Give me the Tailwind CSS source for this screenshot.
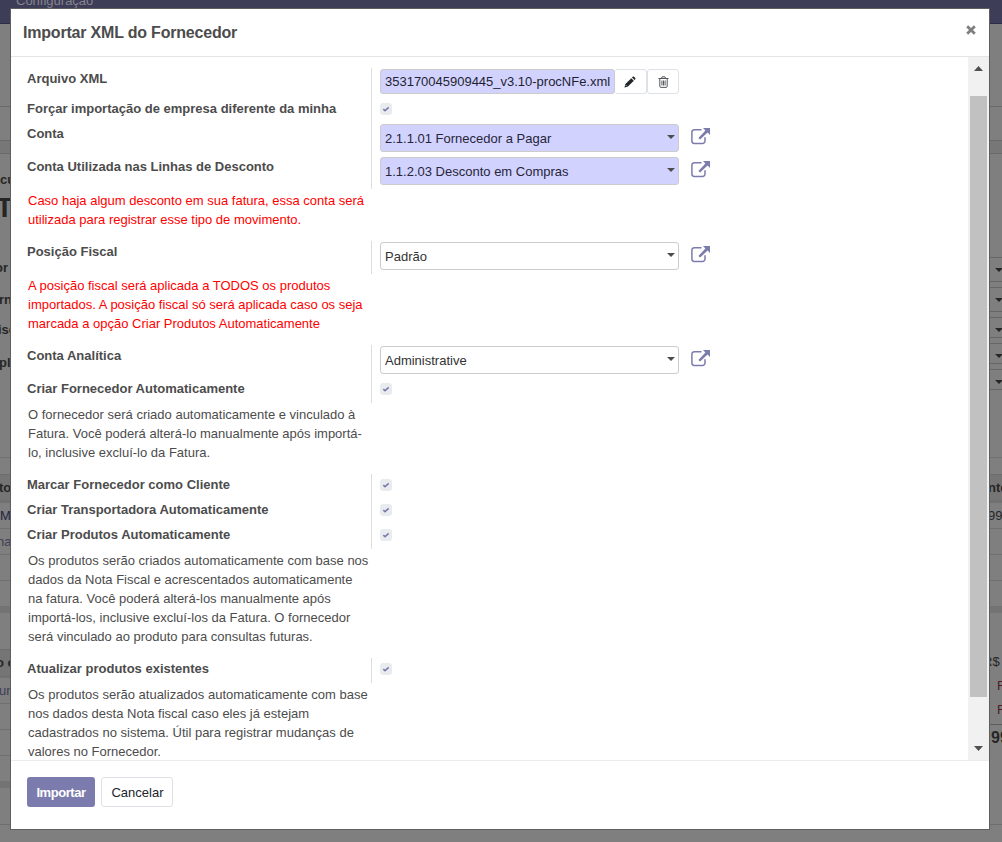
<!DOCTYPE html>
<html lang="pt-BR">
<head>
<meta charset="utf-8">
<title>Importar XML do Fornecedor</title>
<script src="https://cdn.jsdelivr.net/npm/@tailwindcss/browser@4"></script>
</head>
<body class="relative h-[842px] w-[1002px] overflow-hidden bg-[#7f7f7f] font-['Liberation_Sans',Arial,sans-serif] text-[13px] leading-[19px] text-[#4c4c4c]">
<svg class="hidden">
  <symbol id="ext" viewBox="0 0 20 18"><path d="M11.500 2.700H4.300A2.400 2.400 0 0 0 1.900 5.100V14A2.400 2.400 0 0 0 4.300 16.400H12.600A2.400 2.400 0 0 0 15 14V10.300" fill="none" stroke="#7c7bad" stroke-width="1.500"/><path d="M13 1H20V8L17.600 5.600L10.100 12.600L8.400 10.900L15.400 3.400Z" fill="#7c7bad"/></symbol>
  <symbol id="chk" viewBox="0 0 12 12"><path d="M3.300 6.200L5 7.600L8.700 4.300" fill="none" stroke="#7c7bad" stroke-width="1.600"/></symbol>
</svg>

<!-- page behind the dialog -->
<div class="flex h-full flex-col text-[#262626]">
  <div class="h-6 shrink-0 border-b border-[#2c2b48] bg-[#3e3d57] pl-4 leading-[2px] text-[#85848f]">Configuração</div>
  <div class="flex h-[818px] justify-between">
    <div class="flex w-[11px] flex-col overflow-hidden whitespace-nowrap font-bold">
      <div class="h-[83px] shrink-0 border-b border-[#696969]"></div>
      <div class="h-[33px] shrink-0"></div>
      <div class="h-3.5 shrink-0 border-y border-[#696969] bg-[#777]"></div>
      <div class="flex h-[304px] shrink-0 flex-col border-b border-[#707070] pt-[16px]">
        <div class="h-[19px]">cu</div>
        <div class="-ml-[4px] h-[35px] text-[28px] leading-[38px] tracking-[-1.5px]">TA</div>
        <div class="mt-[34px] h-8 -ml-[5px]">or</div>
        <div class="-ml-px h-[30px]">rn</div>
        <div class="-ml-[2px] h-[33px]">iso</div>
        <div class="-ml-px h-[33px]">pl</div>
      </div>
      <div class="h-4 shrink-0"></div>
      <div class="h-[26px] shrink-0 border-t border-[#6d6d6d] bg-[#757575] leading-[26px]"><span class="-ml-px">to</span></div>
      <div class="h-[3px] shrink-0 bg-[#717171]"></div>
      <div class="h-[26px] shrink-0 border-b border-[#6f6f6f] font-normal leading-[26px] text-[#252542]">M</div>
      <div class="h-[26px] shrink-0 border-b border-[#6f6f6f] font-normal leading-[26px] text-[#3e3d57]"><span class="-ml-[3px]">na</span></div>
      <div class="h-[26px] shrink-0 border-b border-[#6f6f6f]"></div>
      <div class="h-[25px] shrink-0"></div>
      <div class="h-[7px] shrink-0 bg-[#737373]"></div>
      <div class="h-9 shrink-0"></div>
      <div class="h-[26px] shrink-0 border-t border-[#6d6d6d] bg-[#757575] leading-[26px]"><span class="-ml-[4px]">o c</span></div>
      <div class="h-[3px] shrink-0 bg-[#717171]"></div>
      <div class="h-[26px] shrink-0 border-b border-[#6f6f6f] font-normal leading-[26px] text-[#3e3d57]"><span class="-ml-px">un</span></div>
      <div class="h-[26px] shrink-0 border-b border-[#6f6f6f]"></div>
      <div class="h-[26px] shrink-0 border-b border-[#6f6f6f]"></div>
      <div class="h-[25px] shrink-0"></div>
      <div class="h-[7px] shrink-0 bg-[#737373]"></div>
      <div class="h-[37px] shrink-0 border-b border-[#6d6d6d]"></div>
    </div>
    <div class="flex w-[13px] flex-col overflow-hidden whitespace-nowrap">
      <div class="h-[83px] shrink-0 border-b border-[#696969]"></div>
      <div class="h-[33px] shrink-0"></div>
      <div class="h-3.5 shrink-0 border-y border-[#696969] bg-[#777]"></div>
      <div class="flex h-[304px] shrink-0 flex-col border-b border-[#707070] pt-[103px]">
        <div class="mb-[5px] flex h-[25px] items-center border-y border-[#666] pl-[6px]"><svg class="h-1 w-2 shrink-0" viewBox="0 0 8 4"><path d="M0 0H8L4 4Z" fill="#262626"/></svg></div>
        <div class="mb-[5px] flex h-[25px] items-center border-y border-[#666] pl-[6px]"><svg class="h-1 w-2 shrink-0" viewBox="0 0 8 4"><path d="M0 0H8L4 4Z" fill="#262626"/></svg></div>
        <div class="mb-[5px] flex h-[21px] items-center border-y border-[#666] pt-1 pl-[6px]"><svg class="h-1 w-2 shrink-0" viewBox="0 0 8 4"><path d="M0 0H8L4 4Z" fill="#262626"/></svg></div>
        <div class="mb-[5px] flex h-[21px] items-center border-y border-[#666] pt-1 pl-[6px]"><svg class="h-1 w-2 shrink-0" viewBox="0 0 8 4"><path d="M0 0H8L4 4Z" fill="#262626"/></svg></div>
        <div class="flex h-[21px] items-center border-y border-[#666] pt-1 pl-[6px]"><svg class="h-1 w-2 shrink-0" viewBox="0 0 8 4"><path d="M0 0H8L4 4Z" fill="#262626"/></svg></div>
      </div>
      <div class="h-4 shrink-0"></div>
      <div class="h-[26px] shrink-0 border-t border-[#6d6d6d] bg-[#757575] font-bold leading-[26px]"><span class="-ml-px">nto</span></div>
      <div class="h-[3px] shrink-0 bg-[#717171]"></div>
      <div class="h-[26px] shrink-0 border-b border-[#6f6f6f] leading-[25px]"><span class="-ml-px">99</span></div>
      <div class="h-[26px] shrink-0 border-b border-[#6f6f6f]"></div>
      <div class="h-[26px] shrink-0 border-b border-[#6f6f6f]"></div>
      <div class="h-[25px] shrink-0"></div>
      <div class="h-[7px] shrink-0 bg-[#737373]"></div>
      <div class="h-[37px] shrink-0"></div>
      <div class="h-6 shrink-0 leading-6"><span class="-ml-[6px]">R$</span></div>
      <div class="h-6 shrink-0 pl-2 leading-6 text-[#4a2024]">R</div>
      <div class="h-[27px] shrink-0 border-b border-[#5c5c5c] pl-2 leading-6 text-[#4a2024]">R</div>
      <div class="h-[100px] shrink-0 border-b border-[#6d6d6d] pl-[2px] text-base font-bold leading-[26px]">99</div>
    </div>
  </div>
</div>

<!-- dialog -->
<div class="absolute top-[9px] left-[11px] flex h-[820px] w-[978px] flex-col bg-white shadow-[0_0_0_1px_#5f5f5f]">
  <header class="flex h-12 shrink-0 items-start justify-between border-b border-[#e5e5e5] pr-[13px] pl-3">
    <h4 class="pt-3 text-base font-bold leading-6 tracking-[-0.2px]">Importar XML do Fornecedor</h4>
    <button aria-label="Fechar" class="mt-4"><svg class="size-[10px]" viewBox="0 0 10 10"><path d="M1.200 1.200L8.800 8.800M8.800 1.200L1.200 8.800" stroke="#7f7f7f" stroke-width="2.800"/></svg></button>
  </header>

  <div class="flex h-[703px] shrink-0 overflow-hidden">
    <main class="w-[957px] pt-[11px] pl-4">
      <section>
        <div class="flex h-[30px]"><b class="w-[345px] border-r border-[#ddd] pt-px leading-5">Arquivo XML</b>
          <div class="ml-2 flex h-[25px] pt-px">
            <div class="h-[25px] w-[235px] rounded-[3px] border border-[#ccc] bg-[#d2d2ff] pl-1 leading-[24px] text-[#1f1f30]"><div class="w-[225px] overflow-hidden whitespace-nowrap tracking-[-0.01px]">353170045909445_v3.10-procNFe.xml</div></div>
            <button class="flex h-[25px] w-8 items-center justify-center rounded-[3px] border border-l-0 border-[#dee2e6] pr-px"><svg class="size-3" viewBox="0 0 12 12"><path d="M0.500 11.500L1.200 8.300L7.300 2.200L9.800 4.700L3.700 10.800ZM8 1.500L8.900 0.600Q9.300 0.300 9.700 0.600L11.400 2.300Q11.700 2.700 11.400 3.100L10.500 4Z" fill="#212529"/><path d="M1.700 9.100L2.900 10.300" stroke="#fff" stroke-width=".8"/></svg></button>
            <button class="flex h-[25px] w-8 items-center justify-center rounded-[3px] border border-[#dee2e6]"><svg class="h-3 w-[11px]" viewBox="0 0 11 12"><path d="M0.500 2.500H10.500M3.500 2.300L4.100 0.800H6.900L7.500 2.300M1.800 2.800V10.300Q1.800 11.400 2.800 11.400H8.200Q9.200 11.400 9.200 10.300V2.800M3.900 4.500V9.500M5.500 4.500V9.500M7.100 4.500V9.500" fill="none" stroke="#4b4f53" stroke-width=".95"/></svg></button>
          </div></div>
        <div class="flex h-[25px]"><b class="w-[345px] border-r border-[#ddd] pt-px leading-5">Forçar importação de empresa diferente da minha</b><svg class="mt-[5px] ml-2 size-3 rounded-[3px] bg-[#e9ecef]"><use href="#chk"/></svg></div>
        <div class="flex h-[33px]"><b class="w-[345px] border-r border-[#ddd] pt-px leading-5">Conta</b>
          <div class="mt-px ml-2 flex h-7 w-[299px] justify-between rounded-[3px] border border-[#ccc] bg-[#d2d2ff] pr-[3px] pl-1 leading-[27px] text-[#262638]">2.1.1.01 Fornecedor a Pagar<svg class="mt-[10px] h-1 w-2" viewBox="0 0 8 4"><path d="M0 0H8L4 4Z" fill="#4c4c4c"/></svg></div><svg class="mt-1 ml-[11px] h-[18px] w-5"><use href="#ext"/></svg></div>
        <div class="flex h-[33px]"><b class="w-[345px] border-r border-[#ddd] pt-px leading-5">Conta Utilizada nas Linhas de Desconto</b>
          <div class="mt-px ml-2 flex h-7 w-[299px] justify-between rounded-[3px] border border-[#ccc] bg-[#d2d2ff] pr-[3px] pl-1 leading-[27px] text-[#262638]">1.1.2.03 Desconto em Compras<svg class="mt-[10px] h-1 w-2" viewBox="0 0 8 4"><path d="M0 0H8L4 4Z" fill="#4c4c4c"/></svg></div><svg class="mt-1 ml-[11px] h-[18px] w-5"><use href="#ext"/></svg></div>
      </section>
      <p class="mt-0.5 mb-3 ml-px whitespace-nowrap text-[#f00]">Caso haja algum desconto em sua fatura, essa conta será<br>utilizada para registrar esse tipo de movimento.</p>
      <section class="flex h-[33px]"><b class="w-[345px] border-r border-[#ddd] pt-px leading-5">Posição Fiscal</b>
        <div class="mt-px ml-2 flex h-7 w-[299px] justify-between rounded-[3px] border border-[#ccc] pr-[3px] pl-1 leading-[27px] text-[#333]">Padrão<svg class="mt-[10px] h-1 w-2" viewBox="0 0 8 4"><path d="M0 0H8L4 4Z" fill="#4c4c4c"/></svg></div><svg class="mt-1 ml-[11px] h-[18px] w-5"><use href="#ext"/></svg></section>
      <p class="mt-0.5 mb-3 ml-px whitespace-nowrap text-[#f00]">A posição fiscal será aplicada a TODOS os produtos<br>importados. A posição fiscal só será aplicada caso os seja<br>marcada a opção Criar Produtos Automaticamente</p>
      <section>
        <div class="flex h-[33px]"><b class="w-[345px] border-r border-[#ddd] pt-px leading-5">Conta Analítica</b>
          <div class="mt-px ml-2 flex h-7 w-[299px] justify-between rounded-[3px] border border-[#ccc] pr-[3px] pl-1 leading-[27px] text-[#333]">Administrative<svg class="mt-[10px] h-1 w-2" viewBox="0 0 8 4"><path d="M0 0H8L4 4Z" fill="#4c4c4c"/></svg></div><svg class="mt-1 ml-[11px] h-[18px] w-5"><use href="#ext"/></svg></div>
        <div class="flex h-[25px]"><b class="w-[345px] border-r border-[#ddd] pt-px leading-5">Criar Fornecedor Automaticamente</b><svg class="mt-[5px] ml-2 size-3 rounded-[3px] bg-[#e9ecef]"><use href="#chk"/></svg></div>
      </section>
      <p class="mt-0.5 mb-3 ml-px whitespace-nowrap">O fornecedor será criado automaticamente e vinculado à<br>Fatura. Você poderá alterá-lo manualmente após importá-<br>lo, inclusive excluí-lo da Fatura.</p>
      <section>
        <div class="flex h-[25px]"><b class="w-[345px] border-r border-[#ddd] pt-px leading-5">Marcar Fornecedor como Cliente</b><svg class="mt-[5px] ml-2 size-3 rounded-[3px] bg-[#e9ecef]"><use href="#chk"/></svg></div>
        <div class="flex h-[25px]"><b class="w-[345px] border-r border-[#ddd] pt-px leading-5">Criar Transportadora Automaticamente</b><svg class="mt-[5px] ml-2 size-3 rounded-[3px] bg-[#e9ecef]"><use href="#chk"/></svg></div>
        <div class="flex h-[25px]"><b class="w-[345px] border-r border-[#ddd] pt-px leading-5">Criar Produtos Automaticamente</b><svg class="mt-[5px] ml-2 size-3 rounded-[3px] bg-[#e9ecef]"><use href="#chk"/></svg></div>
      </section>
      <p class="mt-0.5 mb-3 ml-px whitespace-nowrap">Os produtos serão criados automaticamente com base nos<br>dados da Nota Fiscal e acrescentados automaticamente<br>na fatura. Você poderá alterá-los manualmente após<br>importá-los, inclusive excluí-los da Fatura. O fornecedor<br>será vinculado ao produto para consultas futuras.</p>
      <section class="flex h-[25px]"><b class="w-[345px] border-r border-[#ddd] pt-px leading-5">Atualizar produtos existentes</b><svg class="mt-[5px] ml-2 size-3 rounded-[3px] bg-[#e9ecef]"><use href="#chk"/></svg></section>
      <p class="mt-0.5 ml-px whitespace-nowrap">Os produtos serão atualizados automaticamente com base<br>nos dados desta Nota fiscal caso eles já estejam<br>cadastrados no sistema. Útil para registrar mudanças de<br>valores no Fornecedor.</p>
    </main>
    <div class="flex w-[21px] flex-col items-center bg-[#f1f1f1]">
      <svg class="mt-[9px] mb-[25px] h-[5px] w-[9px] shrink-0" viewBox="0 0 9 5"><path d="M0 5H9L4.500 0Z" fill="#505050"/></svg>
      <div class="h-[601px] w-[17px] shrink-0 bg-[#c1c1c1]"></div>
      <svg class="mt-[49px] h-[5px] w-[9px] shrink-0" viewBox="0 0 9 5"><path d="M0 0H9L4.500 5Z" fill="#505050"/></svg>
    </div>
  </div>

  <footer class="flex flex-1 items-start gap-1.5 border-t border-[#e9ecef] pt-4 pl-4">
    <button class="h-[30px] w-[68px] rounded-[3px] bg-[#7c7bad] font-bold tracking-[-0.45px] text-white">Importar</button>
    <button class="h-[30px] w-[72px] rounded-[3px] border border-[#dee2e6] pl-px text-[#212529]">Cancelar</button>
  </footer>
</div>
</body>
</html>
